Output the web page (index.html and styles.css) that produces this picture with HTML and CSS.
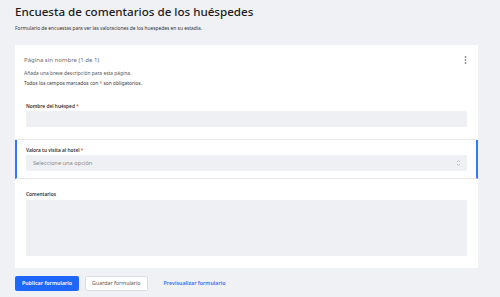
FILE: index.html
```html
<!DOCTYPE html>
<html lang="es">
<head>
  <meta charset="UTF-8" />
  <title>Encuesta de comentarios de los huéspedes</title>
  <link rel="stylesheet" href="styles.css">
</head>
<body>
  <!-- Page heading -->
  <header class="page-head">
    <h1 class="page-title">Encuesta de comentarios de los huéspedes</h1>
    <p class="page-desc">Formulario de encuestas para ver las valoraciones de los huespedes en su estadia.</p>
  </header>

  <!-- Form card -->
  <div class="form-card">
    <div class="section">
      <div class="section-top">
        <div class="section-title">Página sin nombre (1 de 1)</div>
        <svg class="kebab" width="3" height="8" viewBox="0 0 3 8">
          <circle cx="1.5" cy="1" r="0.9" />
          <circle cx="1.5" cy="4" r="0.9" />
          <circle cx="1.5" cy="7" r="0.9" />
        </svg>
      </div>
      <div class="section-desc">Añada una breve descripción para esta página.</div>
      <div class="section-note">Todos los campos marcados con <span class="req">*</span> son obligatorios.</div>

      <div class="field first-field">
        <div class="field-label">Nombre del huésped <span class="req">*</span></div>
        <div class="input"></div>
      </div>
    </div>

    <div class="section active">
      <div class="field">
        <div class="field-label">Valora tu visita al hotel <span class="req">*</span></div>
        <div class="input select">
          <span class="placeholder">Seleccione una opción</span>
          <svg class="arrows" width="5" height="8" viewBox="0 0 5 8">
            <path d="M1 3 L2.5 1.5 L4 3 M1 5 L2.5 6.5 L4 5" />
          </svg>
        </div>
      </div>
    </div>

    <div class="section last">
      <div class="field">
        <div class="field-label">Comentarios</div>
        <div class="input textarea"></div>
      </div>
    </div>
  </div>

  <!-- Actions -->
  <div class="actions">
    <button class="btn btn-primary">Publicar formulario</button>
    <button class="btn btn-secondary">Guardar formulario</button>
    <button class="btn btn-link">Previsualizar formulario</button>
  </div>
</body>
</html>
```

FILE: styles.css
```css
/* ====== Page ====== */
body {
  margin: 0;
  padding: 0 15px;
  background: #f0f1f5;
  font-family: "Noto Sans", "Open Sans", sans-serif;
  color: #222;
}

.page-head {
  padding-top: 3px;
}
.page-title {
  margin: 0;
  font-size: 11.6px;
  line-height: 17px;
  font-weight: 500;
  color: #1c1c1c;
}
.page-desc {
  margin: 5px 0 0;
  font-size: 4.85px;
  line-height: 7px;
  color: #333;
}

/* ====== Card ====== */
.form-card {
  margin-top: 13px;
  width: 463px;
  background: #fff;
}

.section {
  padding: 10px 11px 11.5px 9px;
  border-bottom: 1px solid #e7e8ec;
}
.section.active {
  padding: 7px 9px 6.5px 9px;
  border-left: 2px solid #3478f6;
  border-right: 2px solid #3478f6;
}
.section.last {
  padding: 12.5px 11px 12px 11px;
  border-bottom: none;
}

.section-top {
  display: flex;
  justify-content: space-between;
  align-items: center;
}
.section-title {
  font-size: 6px;
  line-height: 10px;
  color: #6b6b6b;
}
.kebab {
  fill: #8a8a8a;
}
.section-desc,
.section-note {
  font-size: 4.9px;
  line-height: 7px;
  color: #555;
}
.section-desc {
  margin-top: 4.5px;
}
.section-note {
  margin-top: 3px;
  color: #333;
}
.req {
  color: #e0601c;
}

/* ====== Fields ====== */
.first-field {
  margin-top: 16px;
  padding-left: 2px;
}
.field-label {
  font-size: 4.8px;
  line-height: 7px;
  font-weight: 600;
  color: #333;
  margin-bottom: 1.5px;
}
.input {
  height: 16px;
  background: #eff0f4;
  border-radius: 1px;
}
.select {
  display: flex;
  align-items: center;
  justify-content: space-between;
  padding: 0 6px 0 7px;
  box-sizing: border-box;
}
.placeholder {
  font-size: 5.7px;
  color: #8a8a8a;
}
.arrows {
  fill: none;
  stroke: #b5b5b8;
  stroke-width: 0.8;
}
.textarea {
  height: 56px;
}

/* ====== Actions ====== */
.actions {
  display: flex;
  gap: 6px;
  margin-top: 8px;
}
.btn {
  height: 15px;
  padding: 0 6px;
  font-family: inherit;
  font-size: 5.3px;
  border-radius: 1.5px;
  cursor: pointer;
}
.btn-primary {
  background: #1f66fb;
  border: 1px solid #1f66fb;
  color: #fff;
  font-weight: 600;
}
.btn-secondary {
  background: #fff;
  border: 1px solid #dcdde2;
  color: #555;
}
.btn-link {
  margin-left: 4px;
  background: none;
  border: none;
  color: #3a6cf0;
  font-weight: 600;
}
```
